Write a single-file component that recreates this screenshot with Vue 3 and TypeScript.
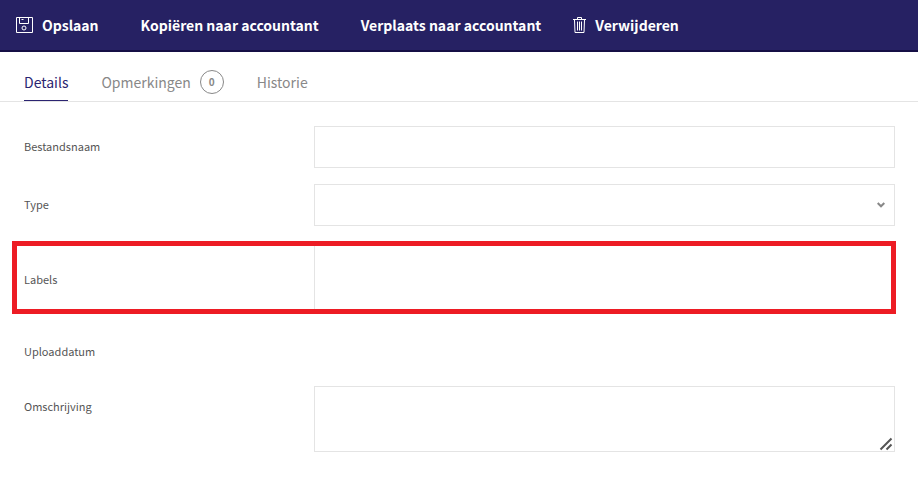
<script setup lang="ts">
import { ref } from 'vue'

interface Tab {
  id: string
  label: string
  count?: number
}

const tabs: Tab[] = [
  { id: 'details', label: 'Details' },
  { id: 'opmerkingen', label: 'Opmerkingen', count: 0 },
  { id: 'historie', label: 'Historie' },
]

const activeTab = ref('details')
const fileName = ref('')
const fileType = ref('')
const labels = ref('')
const description = ref('')
</script>

<template>
  <div class="page">
    <header class="toolbar">
      <button type="button" class="action">
        <svg class="icon save" viewBox="0 0 17 16" aria-hidden="true">
          <path d="M.5 .5h16v15H.5zM3.500 1v5.500h9V1M5.500 2.500h2" />
          <circle cx="8" cy="11" r="2" />
        </svg>
        Opslaan
      </button>
      <button type="button" class="action plain">Kopiëren naar accountant</button>
      <button type="button" class="action plain">Verplaats naar accountant</button>
      <button type="button" class="action">
        <svg class="icon trash" viewBox="0 0 13 16" aria-hidden="true">
          <path d="M0 2.500h13M4.500 2V.5h4V2M1.500 3l.5 12.500h9l.5-12.500M4.500 4.500v9M6.500 4.500v9M8.500 4.500v9" />
        </svg>
        Verwijderen
      </button>
    </header>

    <nav class="tabs">
      <button
        v-for="tab in tabs"
        :key="tab.id"
        type="button"
        class="tab"
        :class="{ active: tab.id === activeTab }"
        @click="activeTab = tab.id"
      >
        {{ tab.label }}
        <span v-if="tab.count !== undefined" class="count">{{ tab.count }}</span>
      </button>
    </nav>

    <form class="form" @submit.prevent>
      <div class="row">
        <label for="file-name">Bestandsnaam</label>
        <input id="file-name" v-model="fileName" class="field" type="text" />
      </div>
      <div class="row">
        <label for="file-type">Type</label>
        <div class="control">
          <select id="file-type" v-model="fileType" class="field">
            <option value=""></option>
          </select>
          <svg class="chevron" viewBox="0 0 8 6" aria-hidden="true">
            <path d="M.7 1 4 4.300 7.300 1" />
          </svg>
        </div>
      </div>
      <div class="row highlighted">
        <label for="labels">Labels</label>
        <input id="labels" v-model="labels" class="field tall" type="text" />
      </div>
      <div class="row static">
        <label for="upload-date">Uploaddatum</label>
        <output id="upload-date"></output>
      </div>
      <div class="row top">
        <label for="description">Omschrijving</label>
        <div class="control">
          <textarea id="description" v-model="description" class="field"></textarea>
          <svg class="grip" viewBox="0 0 14 14" aria-hidden="true">
            <path d="M1.500 12.500l11-11M7.500 12.500l5-5" />
          </svg>
        </div>
      </div>
    </form>
  </div>
</template>

<style>
body {
  background: #fff;
}
</style>

<style scoped>
.page {
  font-family: "Noto Sans CJK SC", "Open Sans", sans-serif;
  color: #555;
}

button {
  margin: 0;
  padding: 0;
  border: 0;
  background: none;
  font-family: inherit;
  cursor: pointer;
}

.toolbar {
  display: flex;
  align-items: stretch;
  gap: 32px;
  height: 52px;
  box-sizing: border-box;
  padding: 0 16px;
  background: #262163;
  border-bottom: 2px solid #150f45;
}

.action {
  display: flex;
  align-items: center;
  gap: 9px;
  color: #fff;
  font-size: 14px;
  font-weight: 700;
  line-height: 20px;
  white-space: nowrap;
}

.action.plain {
  padding-left: 10px;
}

.icon {
  fill: none;
  stroke: #fff;
  stroke-width: 1;
  height: 16px;
}

.save {
  width: 17px;
}

.trash {
  width: 13px;
}

.tabs {
  display: flex;
  gap: 33px;
  height: 50px;
  box-sizing: border-box;
  padding: 0 24px;
  border-bottom: 1px solid #e4e4e4;
}

.tab {
  display: flex;
  align-items: center;
  gap: 9px;
  padding-top: 12px;
  border-bottom: 1px solid transparent;
  color: #888;
  font-size: 14px;
  line-height: 20px;
}

.tab.active {
  color: #2b2471;
  border-bottom-color: #2b2471;
}

.count {
  box-sizing: border-box;
  width: 24px;
  height: 24px;
  border: 1px solid #888;
  border-radius: 50%;
  font-size: 10px;
  font-weight: 700;
  line-height: 22px;
  text-align: center;
}

.form {
  display: flex;
  flex-direction: column;
  gap: 16px;
  padding: 24px 23px 24px 24px;
}

.row {
  display: grid;
  grid-template-columns: 1fr 2fr;
  align-items: center;
}

.row label {
  padding-bottom: 2px;
  font-size: 11px;
  line-height: 16px;
}

.control {
  position: relative;
  display: flex;
}

.field {
  width: 100%;
  height: 42px;
  box-sizing: border-box;
  margin: 0;
  padding: 8px 12px;
  border: 1px solid #e4e4e4;
  border-radius: 0;
  background: #fff;
  color: #555;
  font: inherit;
  font-size: 14px;
  outline: none;
  appearance: none;
}

.chevron {
  position: absolute;
  top: 18px;
  right: 10px;
  width: 8px;
  height: 6px;
  fill: none;
  stroke: #888;
  stroke-width: 2;
  pointer-events: none;
}

.highlighted {
  position: relative;
  min-height: 76px;
}

.highlighted::after {
  content: "";
  position: absolute;
  top: -1px;
  right: -1px;
  left: -12px;
  height: 73px;
  box-sizing: border-box;
  border: 5px solid #ed1c24;
  pointer-events: none;
}

.field.tall {
  height: 70px;
  align-self: start;
}

.static {
  min-height: 36px;
}

.top {
  align-items: start;
}

.top label {
  padding-top: 12px;
}

textarea.field {
  height: 66px;
  resize: none;
}

.grip {
  position: absolute;
  right: 2px;
  bottom: 1px;
  width: 14px;
  height: 14px;
  fill: none;
  stroke: #555;
  stroke-width: 2;
  pointer-events: none;
}
</style>
